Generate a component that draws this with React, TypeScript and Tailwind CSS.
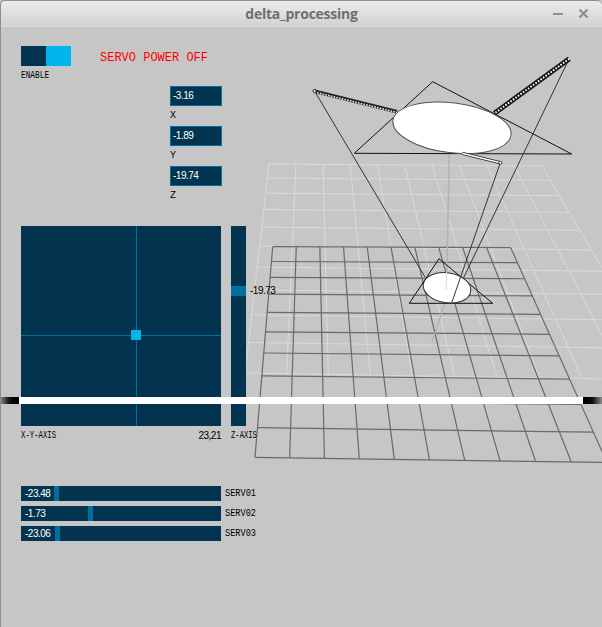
import React from "react";

type P = [number, number];

function homography(tl: P, tr: P, br: P, bl: P) {
  const [x0, y0] = tl, [x1, y1] = tr, [x2, y2] = br, [x3, y3] = bl;
  const dx1 = x1 - x2, dx2 = x3 - x2, sx = x0 - x1 + x2 - x3;
  const dy1 = y1 - y2, dy2 = y3 - y2, sy = y0 - y1 + y2 - y3;
  const den = dx1 * dy2 - dx2 * dy1;
  const g = (sx * dy2 - dx2 * sy) / den;
  const h = (dx1 * sy - sx * dy1) / den;
  const a = x1 - x0 + g * x1, b = x3 - x0 + h * x3;
  const d = y1 - y0 + g * y1, e = y3 - y0 + h * y3;
  return (u: number, v: number): P => {
    const w = g * u + h * v + 1;
    return [(a * u + b * v + x0) / w, (d * u + e * v + y0) / w];
  };
}

function Grid({ corners, stroke, width }: { corners: [P, P, P, P]; stroke: string; width: number }) {
  const map = homography(...corners);
  const lines: React.ReactNode[] = [];
  for (let i = 0; i <= 10; i++) {
    const a = map(i / 10, 0), b = map(i / 10, 1), c = map(0, i / 10), d = map(1, i / 10);
    lines.push(<line key={"v" + i} x1={a[0]} y1={a[1]} x2={b[0]} y2={b[1]} stroke={stroke} strokeWidth={width} />);
    lines.push(<line key={"h" + i} x1={c[0]} y1={c[1]} x2={d[0]} y2={d[1]} stroke={stroke} strokeWidth={width} />);
  }
  return <g>{lines}</g>;
}

function Scene() {
  return (
    <svg className="absolute left-0 top-0" width="602" height="627" viewBox="0 0 602 627">
      <Grid corners={[[269, 164], [542, 166], [668, 380], [245, 373]]} stroke="#dadada" width={1} />
      <Grid corners={[[272.7, 246.7], [510.7, 247.7], [607, 462.5], [255, 457.3]]} stroke="#6a6a6a" width={1.2} />

      {/* vertical centre shaft */}
      <line x1="449.3" y1="153" x2="446.5" y2="288" stroke="#b2b2b2" strokeWidth="1.5" />
      <line x1="446" y1="300" x2="431.7" y2="343" stroke="#b2b2b2" strokeWidth="1.2" />

      {/* top platform */}
      <polygon points="432.7,81.7 354.3,153.3 571.7,154" fill="none" stroke="#111" strokeWidth="1" />
      {/* rods */}
      <line x1="314.5" y1="91" x2="425" y2="277" stroke="#333" strokeWidth="1" />
      <line x1="569" y1="59" x2="463" y2="279" stroke="#333" strokeWidth="1" />

      {/* bottom platform */}
      <polygon points="439,258.7 409.3,303.3 492.7,303.3" fill="none" stroke="#111" strokeWidth="1" />
      <ellipse cx="447" cy="287.8" rx="24" ry="15" transform="rotate(9 447 287.8)" fill="#fff" stroke="#333" strokeWidth="1" />
      <line x1="446.6" y1="272" x2="446" y2="290" stroke="#d8d8d8" strokeWidth="1" />
      <line x1="500.3" y1="162.7" x2="451.7" y2="302.7" stroke="#333" strokeWidth="1" />

      {/* top ellipse */}
      <ellipse cx="452" cy="127.8" rx="59.5" ry="25" transform="rotate(7 452 127.8)" fill="#fff" stroke="#555" strokeWidth="1" />

      {/* arms */}
      <line x1="314.5" y1="91.2" x2="397" y2="111.7" stroke="#222" strokeWidth="3.6" />
      <line x1="314.5" y1="92" x2="397" y2="112.5" stroke="#ececec" strokeWidth="1.6" strokeDasharray="1.6 1.2" />
      <line x1="569.3" y1="58.7" x2="494.5" y2="113.3" stroke="#111" strokeWidth="5" />
      <line x1="569.3" y1="58.7" x2="494.5" y2="113.3" stroke="#fff" strokeWidth="2" strokeDasharray="1.6 1.5" />
      <line x1="462" y1="153.3" x2="500.3" y2="162.7" stroke="#222" strokeWidth="3.2" />
      <line x1="462" y1="153.3" x2="500.3" y2="162.7" stroke="#fff" strokeWidth="1.6" />
      <circle cx="314.5" cy="91" r="1.6" fill="#ddd" stroke="#111" strokeWidth="0.8" />
      <circle cx="500.3" cy="162.7" r="1.6" fill="#fff" stroke="#111" strokeWidth="0.8" />
    </svg>
  );
}

const labelFont = "block origin-left font-['Liberation_Mono',monospace] text-[10px] leading-[10px] text-black whitespace-nowrap";
const valueFont = "font-['Liberation_Sans',sans-serif] text-[10px] leading-[10px] tracking-[-0.5px] whitespace-nowrap";

function NumberBox({ value, label }: { value: string; label: string }) {
  return (
    <div className="h-[40px]">
      <div className={"flex h-[20px] w-[52px] items-center border border-[#026fa3] bg-[#02344f] pl-[2px] text-white " + valueFont}>
        {value}
      </div>
      <div className={"mt-[5px] " + labelFont}>{label}</div>
    </div>
  );
}

function Servo({ value, label, handle }: { value: string; label: string; handle: number }) {
  return (
    <div className="flex h-[15px] items-center gap-[4px]">
      <div className="relative flex h-[15px] w-[200px] items-center bg-[#02344f] pl-[4px]">
        <div className="absolute top-0 h-[15px] w-[5px] bg-[#026fa3]" style={{ left: handle }} />
        <span className={"relative text-white " + valueFont}>{value}</span>
      </div>
      <span className={"scale-x-[0.86] " + labelFont}>{label}</span>
    </div>
  );
}

export default function App() {
  return (
    <div className="relative h-[627px] w-[602px] overflow-hidden bg-[#c6c6c6]">
      <Scene />

      {/* window chrome */}
      <header className="relative flex h-[26px] items-center justify-center rounded-t-[5px] border-l border-t border-[#8f8f8f] bg-gradient-to-b from-[#ececec] to-[#d2d2d2] shadow-[0_1px_0_#d8d8d8]">
        <span className="font-['Open_Sans',sans-serif] text-[14px] font-bold leading-none tracking-[-0.25px] text-[#6f6f6f]">delta_processing</span>
        <div className="absolute right-[13px] top-0 flex h-full items-center gap-[14px] text-[#909090]">
          <svg width="11" height="11" viewBox="0 0 11 11"><rect x="0" y="5" width="10" height="2" fill="currentColor" /></svg>
          <svg width="11" height="11" viewBox="0 0 11 11"><path d="M1.5 1.5 9.5 9.5M9.5 1.5 1.5 9.5" stroke="currentColor" strokeWidth="2.2" fill="none" /></svg>
        </div>
      </header>
      <div className="absolute bottom-0 left-0 top-[26px] w-px bg-[#8f8f8f]" />

      <main className="relative pl-[21px] pt-[20px]">
        <div className="flex items-start">
          <div className="w-[79px]">
            <div className="flex h-[20px] w-[50px]">
              <div className="flex-1 bg-[#02344f]" />
              <div className="flex-1 bg-[#01b4ec]" />
            </div>
            <div className={"mt-[5px] scale-x-[0.78] " + labelFont}>ENABLE</div>
          </div>
          <div className="mt-[5px] font-['Liberation_Mono',monospace] text-[12px] leading-[14px] text-[#ff0000]">SERVO POWER OFF</div>
        </div>

        <div className="ml-[149px] mt-[5px]">
          <NumberBox value="-3.16" label="X" />
          <NumberBox value="-1.89" label="Y" />
          <NumberBox value="-19.74" label="Z" />
        </div>

        <div className="mt-[20px] flex items-start">
          <div className="w-[200px]">
            <div className="relative h-[200px] w-[200px] bg-[#02344f]">
              <div className="absolute bottom-0 left-[115px] top-0 w-px bg-[#026fa3]" />
              <div className="absolute left-0 right-0 top-[109px] h-px bg-[#026fa3]" />
              <div className="absolute left-[110px] top-[104px] h-[10px] w-[10px] bg-[#01b4ec]" />
            </div>
            <div className="mt-[5px] flex items-center justify-between">
              <span className={"scale-x-[0.73] " + labelFont}>X-Y-AXIS</span>
              <span className={"text-black " + valueFont}>23,21</span>
            </div>
          </div>
          <div className="ml-[10px]">
            <div className="relative h-[200px] w-[15px] bg-[#02344f]">
              <div className="absolute left-0 top-[60px] h-[10px] w-[15px] bg-[#026fa3]" />
              <span className={"absolute left-[19px] top-[60px] text-black " + valueFont}>-19.73</span>
            </div>
            <div className={"mt-[5px] scale-x-[0.72] " + labelFont}>Z-AXIS</div>
          </div>
        </div>

        <div className="mt-[45px] flex flex-col gap-[5px]">
          <Servo value="-23.48" label="SERV01" handle={33} />
          <Servo value="-1.73" label="SERV02" handle={67} />
          <Servo value="-23.06" label="SERV03" handle={34} />
        </div>
      </main>

      {/* horizontal rule painted across the window */}
      <div className="absolute left-0 right-0 top-[397px] flex h-[7px]">
        <div className="w-[19px] bg-gradient-to-r from-[#8f8f8f] via-[#111] via-50% to-black" />
        <div className="flex-1 bg-white" />
        <div className="w-[19px] bg-gradient-to-l from-[#8f8f8f] via-[#111] via-50% to-black" />
      </div>
    </div>
  );
}
